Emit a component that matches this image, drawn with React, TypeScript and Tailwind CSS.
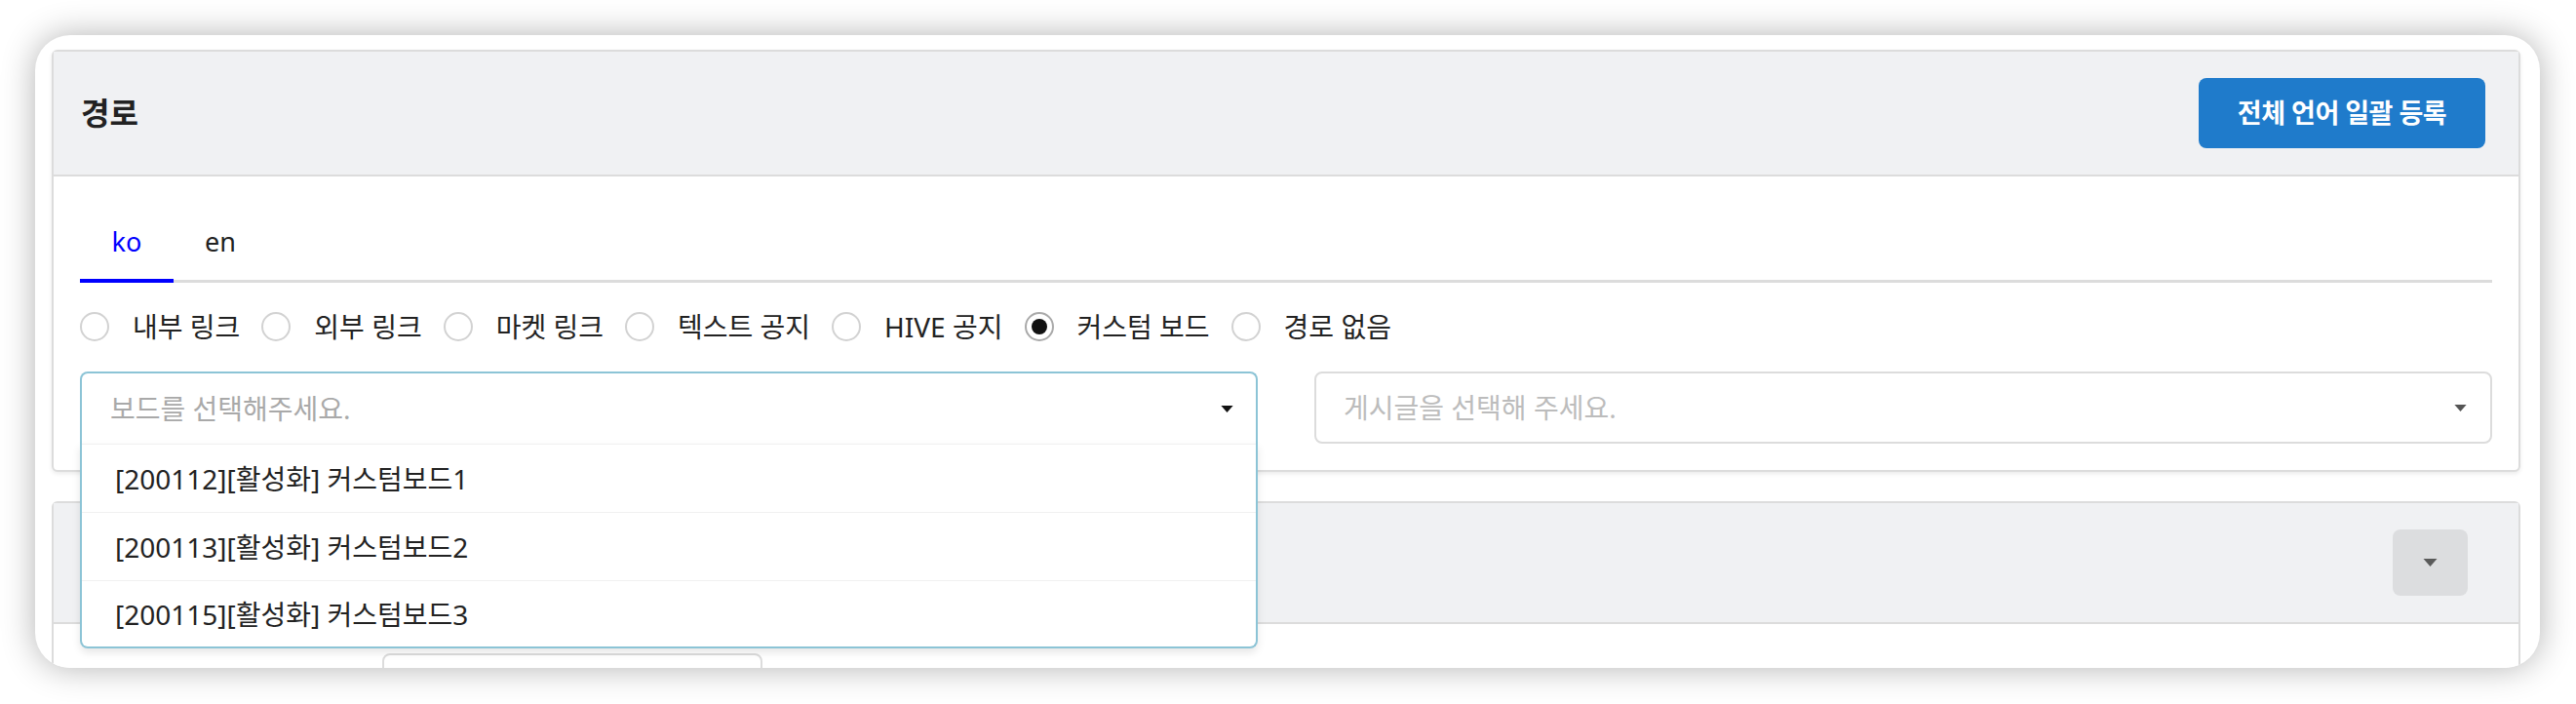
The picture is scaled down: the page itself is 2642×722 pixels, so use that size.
import { useState } from 'react';

const Caret = ({ className }: { className?: string }) => (
  <svg viewBox="0 0 14 8" className={className} fill="currentColor">
    <path d="M0 0h14L7 8z" />
  </svg>
);

const routeTypes = ['내부 링크', '외부 링크', '마켓 링크', '텍스트 공지', 'HIVE 공지', '커스텀 보드', '경로 없음'];
const boards = ['[200112][활성화] 커스텀보드1', '[200113][활성화] 커스텀보드2', '[200115][활성화] 커스텀보드3'];

const Radio = ({ label, checked, onClick }: { label: string; checked: boolean; onClick: () => void }) => (
  <label className="flex items-center gap-[24px] cursor-pointer" onClick={onClick}>
    <span
      className={
        checked
          ? 'flex h-[30px] w-[30px] items-center justify-center rounded-full border-2 border-[#a9a9a9]'
          : 'flex h-[30px] w-[30px] items-center justify-center rounded-full border-2 border-[#d2d2d2]'
      }
    >
      {checked && <span className="h-[16px] w-[16px] rounded-full bg-[#111]" />}
    </span>
    <span className="text-[28px] leading-none text-[#222]">{label}</span>
  </label>
);

export default function App() {
  const [tab, setTab] = useState('ko');
  const [route, setRoute] = useState('커스텀 보드');

  return (
    <div className="min-h-screen bg-white pl-[36px] pr-[37px] pt-[36px] pb-[37px] font-['Noto_Sans','Noto_Sans_CJK_KR',sans-serif]">
      <div className="h-[649px] overflow-hidden rounded-[36px] bg-white pl-[17px] pr-[20px] pt-[15px] shadow-[0_0_34px_rgba(0,0,0,0.3)]">
        {/* 경로 */}
        <section className="rounded-[6px] border-2 border-[#dcdcdc] bg-white shadow-[0_2px_4px_rgba(0,0,0,0.08)]">
          <div className="flex h-[128px] items-center justify-between border-b-2 border-[#dcdcdc] bg-[#f0f1f3] pl-[28px] pr-[34px]">
            <h2 className="text-[32px] font-bold leading-none text-[#222]">경로</h2>
            <button className="h-[72px] w-[294px] rounded-[8px] bg-[#1f7bcb] text-[27px] font-bold tracking-[-0.5px] text-white">
              전체 언어 일괄 등록
            </button>
          </div>

          <div className="px-[27px] pt-[30px] pb-[27px]">
            <div className="flex border-b-[3px] border-[#dcdcdc]">
              {['ko', 'en'].map((t) => (
                <button
                  key={t}
                  onClick={() => setTab(t)}
                  className={
                    tab === t
                      ? '-mb-[3px] flex h-[79px] w-[96px] items-center justify-center border-b-4 border-[#0000ff] text-[27px] text-[#0000ff]'
                      : '-mb-[3px] flex h-[79px] w-[96px] items-center justify-center border-b-4 border-transparent text-[27px] text-[#222]'
                  }
                >
                  {t}
                </button>
              ))}
            </div>

            <div className="mt-[30px] flex h-[30px] items-center gap-[22px]">
              {routeTypes.map((r) => (
                <Radio key={r} label={r} checked={route === r} onClick={() => setRoute(r)} />
              ))}
            </div>

            <div className="mt-[31px] grid grid-cols-2 gap-[58px]">
              <div className="relative z-10">
                <div className="flex h-[74px] items-center justify-between rounded-t-[8px] border-2 border-b-0 border-[#8cc4d6] bg-white pl-[29px] pr-[23px]">
                  <span className="text-[28px] text-[#a9a9a9]">보드를 선택해주세요.</span>
                  <Caret className="h-[7px] w-[13px] text-[#111]" />
                </div>
                <ul className="absolute left-0 right-0 top-full rounded-b-[8px] border-2 border-t-0 border-[#8cc4d6] bg-white shadow-[0_4px_8px_rgba(0,0,0,0.1)]">
                  {boards.map((b, i) => (
                    <li
                      key={b}
                      className={
                        i === 2
                          ? 'flex h-[68px] items-center border-t border-[#f0f0f0] pl-[34px] text-[28px] text-[#222]'
                          : 'flex h-[70px] items-center border-t border-[#f0f0f0] pl-[34px] text-[28px] text-[#222]'
                      }
                    >
                      {b}
                    </li>
                  ))}
                </ul>
              </div>
              <div className="flex h-[74px] items-center justify-between rounded-[8px] border-2 border-[#dcdcdc] pl-[28px] pr-[24px]">
                <span className="text-[28px] text-[#bcbcbc]">게시글을 선택해 주세요.</span>
                <Caret className="h-[7px] w-[13px] text-[#555]" />
              </div>
            </div>
          </div>
        </section>

        {/* second panel */}
        <section className="mt-[30px] rounded-[6px] border-2 border-[#dcdcdc] bg-white">
          <div className="flex h-[124px] items-center justify-end border-b-2 border-[#dcdcdc] bg-[#f0f1f3] pr-[52px]">
            <button className="flex h-[68px] w-[77px] items-center justify-center rounded-[8px] bg-[#dcdddf]">
              <Caret className="h-[8px] w-[17px] text-[#5a5a5a]" />
            </button>
          </div>
          <div className="pl-[337px] pt-[30px] pb-[30px]">
            <div className="h-[74px] w-[390px] rounded-[8px] border-2 border-[#dcdcdc]" />
          </div>
        </section>
      </div>
    </div>
  );
}
